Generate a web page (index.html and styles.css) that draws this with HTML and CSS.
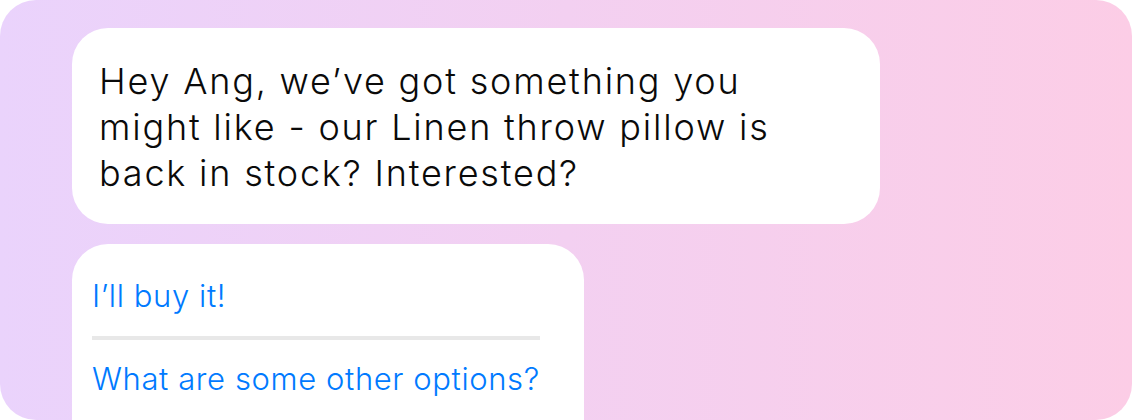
FILE: index.html
```html
<!DOCTYPE html>
<html lang="en">
<head>
    <meta charset="UTF-8">
    <meta name="viewport" content="width=device-width, initial-scale=1.0">
    <title>Chat - Back in stock</title>
    <link rel="stylesheet" href="styles.css">
</head>
<body>
    <div class="chat-panel">
        <div class="bubble message">
            <p>Hey Ang, we’ve got something you<br>might like - our Linen throw pillow is<br>back in stock? Interested?</p>
        </div>
        <div class="bubble replies">
            <a href="#" class="reply">I’ll buy it!</a>
            <hr class="divider">
            <a href="#" class="reply">What are some other options?</a>
        </div>
    </div>
</body>
</html>
```

FILE: styles.css
```css
* {
    margin: 0;
    padding: 0;
    box-sizing: border-box;
}

body {
    font-family: 'Inter', 'Roboto', sans-serif;
    background-color: #ffffff;
    width: 1132px;
    height: 420px;
    overflow: hidden;
}

.chat-panel {
    width: 1132px;
    height: 420px;
    border-radius: 36px;
    overflow: hidden;
    background: linear-gradient(90deg, #ead3fc 0%, #fccde6 100%);
    padding: 28px 0 0 72px;
    display: flex;
    flex-direction: column;
    gap: 20px;
}

.bubble {
    background-color: #ffffff;
    border-radius: 36px;
}

.message {
    flex-shrink: 0;
    width: 808px;
    height: 196px;
    padding: 30px 20px 0 27px;
}

.message p {
    font-size: 36px;
    font-weight: 300;
    line-height: 46px;
    color: #0a0a0a;
    letter-spacing: 1.8px;
}

.replies {
    width: 512px;
    flex: 1;
    border-radius: 36px 36px 0 0;
    padding: 34px 44px 0 20px;
    display: flex;
    flex-direction: column;
    align-items: flex-start;
}

.reply {
    font-size: 31px;
    font-weight: 300;
    line-height: 36px;
    color: #007aff;
    text-decoration: none;
    letter-spacing: 0.6px;
    white-space: nowrap;
}

.divider {
    align-self: stretch;
    border: none;
    height: 4px;
    background-color: #e8e8e8;
    margin: 22px 0 21px;
}
```
